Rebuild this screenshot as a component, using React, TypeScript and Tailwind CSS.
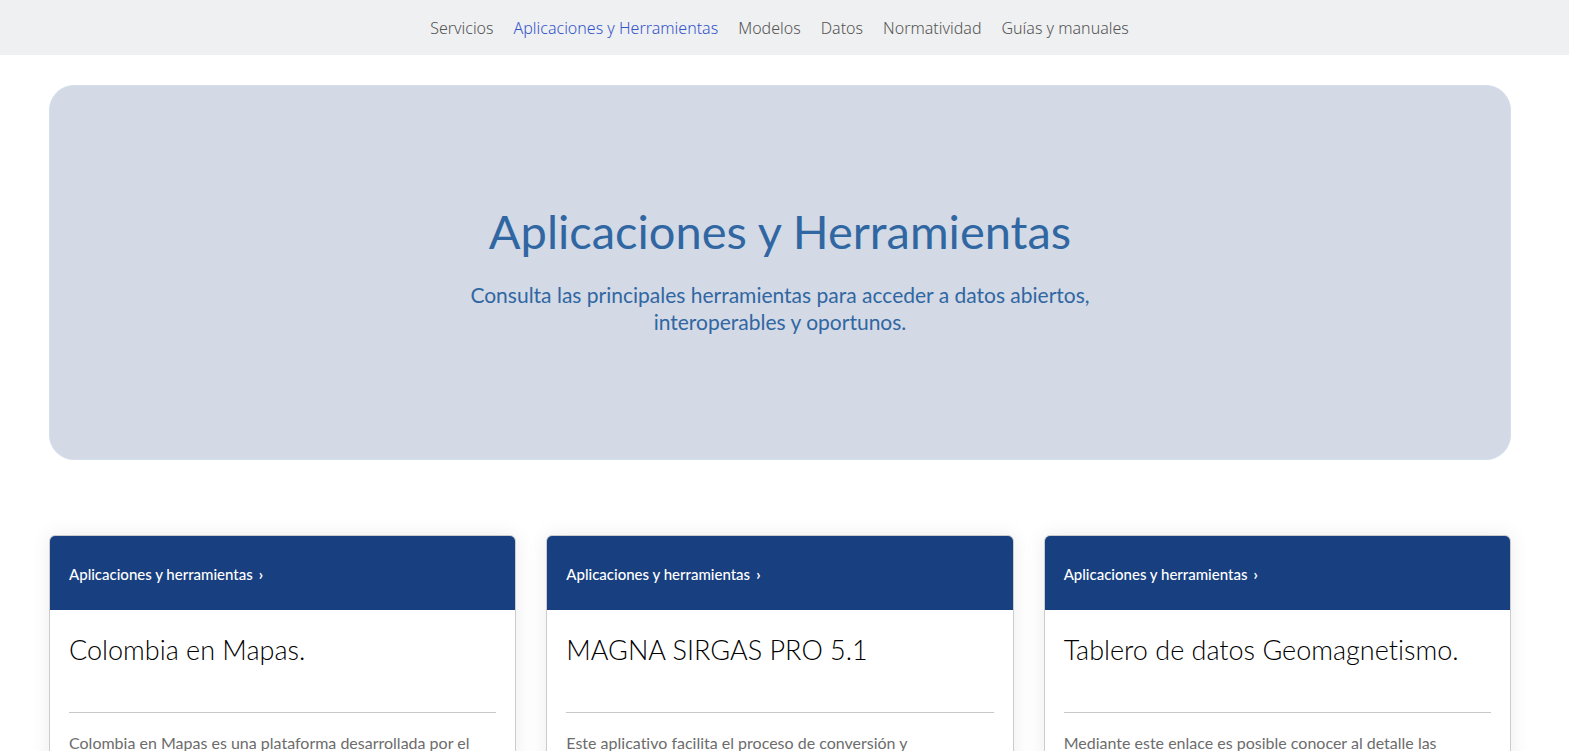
const links = [
  'Servicios',
  'Aplicaciones y Herramientas',
  'Modelos',
  'Datos',
  'Normatividad',
  'Guías y manuales',
];

const cards = [
  { title: 'Colombia en Mapas.', text: 'Colombia en Mapas es una plataforma desarrollada por el' },
  { title: 'MAGNA SIRGAS PRO 5.1', text: 'Este aplicativo facilita el proceso de conversión y' },
  { title: 'Tablero de datos Geomagnetismo.', text: 'Mediante este enlace es posible conocer al detalle las' },
];

export default function App() {
  return (
    <div className="h-screen overflow-y-auto bg-white font-['Gill_Sans_MT','Gill_Sans',Lato,sans-serif] [font-variant-ligatures:none] [scrollbar-width:none]">
      <nav className="flex h-[55px] items-center justify-center gap-5 bg-[#eff0f1] pr-2.5 font-['Noto_Sans',sans-serif] text-base font-light text-[#555]">
        {links.map((l, i) => (
          <a key={l} href="#" className={i === 1 ? 'text-[#3355cc]' : ''}>
            {l}
          </a>
        ))}
      </nav>
      <main className="mt-[30px] mr-[58px] ml-[49px]">
        <section className="flex flex-col items-center rounded-[25px] border border-[#d3dfec] bg-[#d3d9e5] pt-[115px] pb-[124px] text-center text-[#3067a2]">
          <h1 className="text-[47px] leading-[60px]">Aplicaciones y Herramientas</h1>
          <p className="mt-5 max-w-[660px] text-[21px] leading-[27px]">
            Consulta las principales herramientas para acceder a datos abiertos, interoperables y oportunos.
          </p>
        </section>
        <section className="mt-[75px] grid grid-cols-3 gap-[30px]">
          {cards.map((c) => (
            <article
              key={c.title}
              className="overflow-hidden rounded-md border border-[#ccc] pb-10 shadow-[0_0_20px_rgba(0,0,0,0.08)]"
            >
              <a
                href="#"
                className="flex h-[74px] items-center gap-1.5 bg-[#183f7f] px-[19px] pt-0.5 text-[15px] font-medium text-white"
              >
                Aplicaciones y herramientas <span className="font-bold">›</span>
              </a>
              <div className="px-[19px] pt-6">
                <h2 className="text-[27px] leading-8 font-light text-black">{c.title}</h2>
                <hr className="mt-[46px] border-[#c8c8c8]" />
                <p className="mt-[18px] text-base leading-6 text-[#6c6c6c]">{c.text}</p>
              </div>
            </article>
          ))}
        </section>
      </main>
    </div>
  );
}
